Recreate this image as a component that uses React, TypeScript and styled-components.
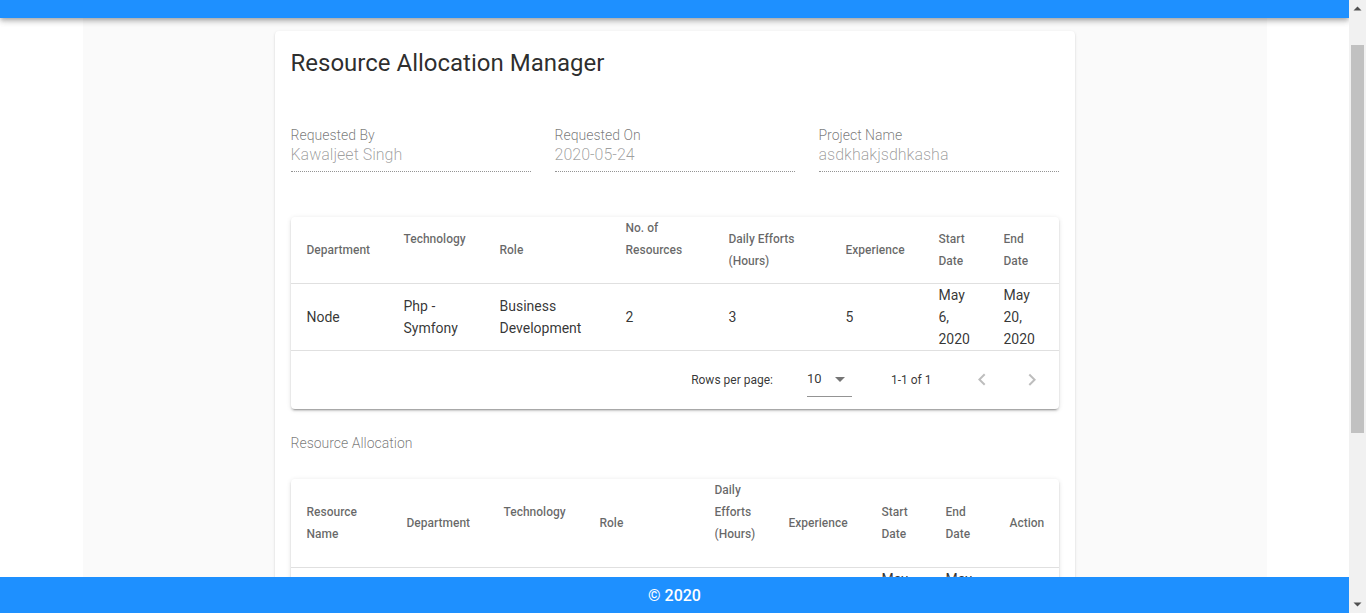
import React from "react";
import styled, { createGlobalStyle } from "styled-components";
import { Trash2 } from "lucide-react";

const GlobalStyle = createGlobalStyle`
  body {
    margin: 0;
    background: #fff;
    font-family: Roboto, "Liberation Sans", Arial, sans-serif;
    color: rgba(0, 0, 0, 0.87);
  }
`;

type Column = { key: string; title: string[]; width: number };
type Row = Record<string, React.ReactNode[]>;

const blank = "\u00a0";

const requestColumns: Column[] = [
  { key: "department", title: ["Department"], width: 97 },
  { key: "technology", title: ["Technology", blank], width: 96 },
  { key: "role", title: ["Role"], width: 126 },
  { key: "resources", title: ["No. of", "Resources", blank], width: 103 },
  { key: "efforts", title: ["Daily Efforts", "(Hours)"], width: 117 },
  { key: "experience", title: ["Experience"], width: 93 },
  { key: "start", title: ["Start", "Date"], width: 65 },
  { key: "end", title: ["End", "Date"], width: 71 },
];

const allocationColumns: Column[] = [
  { key: "name", title: ["Resource", "Name"], width: 100 },
  { key: "department", title: ["Department"], width: 97 },
  { key: "technology", title: ["Technology", blank], width: 96 },
  { key: "role", title: ["Role"], width: 115 },
  { key: "efforts", title: ["Daily", "Efforts", "(Hours)", blank], width: 74 },
  { key: "experience", title: ["Experience"], width: 93 },
  { key: "start", title: ["Start", "Date"], width: 64 },
  { key: "end", title: ["End", "Date"], width: 64 },
  { key: "action", title: ["Action"], width: 65 },
];

const requestRows: Row[] = [
  {
    department: ["Node"],
    technology: ["Php -", "Symfony"],
    role: ["Business", "Development"],
    resources: ["2"],
    efforts: ["3"],
    experience: ["5"],
    start: ["May", "6,", "2020"],
    end: ["May", "20,", "2020"],
  },
];

const allocationRows: Row[] = [
  {
    name: ["Kawaljeet", "Singh"],
    department: ["Node"],
    technology: ["Php -", "Symfony"],
    role: ["Business", "Development"],
    efforts: ["3"],
    experience: ["5"],
    start: ["May", "6,", "2020"],
    end: ["May", "20,", "2020"],
    action: [<Trash2 key="del" size={18} color="rgba(0,0,0,0.54)" />],
  },
];

const Pager = () => (
  <PagerBar>
    <PagerCaption>Rows per page:</PagerCaption>
    <PageSelect>
      <span>10</span>
      <svg width="24" height="20" viewBox="0 2 24 20">
        <path d="M7 10l5 5 5-5z" fill="rgba(0,0,0,0.54)" />
      </svg>
    </PageSelect>
    <PagerRange>1-1 of 1</PagerRange>
    <PagerActions>
      <NavButton disabled aria-label="previous page">
        <svg width="24" height="24" viewBox="0 0 24 24">
          <path d="M15.41 16.09l-4.58-4.59 4.58-4.59L14 5.5l-6 6 6 6z" />
        </svg>
      </NavButton>
      <NavButton disabled aria-label="next page">
        <svg width="24" height="24" viewBox="0 0 24 24">
          <path d="M8.59 16.34l4.59-4.59-4.59-4.59L10 5.75l6 6-6 6z" />
        </svg>
      </NavButton>
    </PagerActions>
  </PagerBar>
);

const DataTable = ({ columns, rows }: { columns: Column[]; rows: Row[] }) => (
  <TablePaper>
    <Table>
      <thead>
        <tr>
          {columns.map((col) => (
            <HeadCell key={col.key} $width={col.width}>
              {col.title.map((line, i) => (
                <Line key={i}>{line}</Line>
              ))}
            </HeadCell>
          ))}
        </tr>
      </thead>
      <tbody>
        {rows.map((row, r) => (
          <tr key={r}>
            {columns.map((col) => (
              <BodyCell key={col.key}>
                {(row[col.key] || []).map((line, i) => (
                  <Line key={i}>{line}</Line>
                ))}
              </BodyCell>
            ))}
          </tr>
        ))}
      </tbody>
    </Table>
    <Pager />
  </TablePaper>
);

// stand-in for the browser's classic scrollbar seen in the screenshot
const ScrollRail = () => (
  <Rail>
    <RailButton>
      <svg width="17" height="17" viewBox="0 0 17 17">
        <path d="M4.5 10.5h8l-4-4z" fill="#505050" />
      </svg>
    </RailButton>
    <RailTrack>
      <RailThumb />
    </RailTrack>
    <RailButton>
      <svg width="17" height="17" viewBox="0 0 17 17">
        <path d="M4.5 6.5h8l-4 4z" fill="#505050" />
      </svg>
    </RailButton>
  </Rail>
);

const App = () => {
  return (
    <Page>
      <GlobalStyle />
      <TopBar />
      <Main>
        <Card>
          <Title>Resource Allocation Manager</Title>
          <Fields>
            <div>
              <FieldLabel>Requested By</FieldLabel>
              <FieldValue>Kawaljeet Singh</FieldValue>
            </div>
            <div>
              <FieldLabel>Requested On</FieldLabel>
              <FieldValue>2020-05-24</FieldValue>
            </div>
            <div>
              <FieldLabel>Project Name</FieldLabel>
              <FieldValue>asdkhakjsdhkasha</FieldValue>
            </div>
          </Fields>
          <TableBlock>
            <DataTable columns={requestColumns} rows={requestRows} />
          </TableBlock>
          <SectionLabel>Resource Allocation</SectionLabel>
          <DataTable columns={allocationColumns} rows={allocationRows} />
        </Card>
      </Main>
      <Footer>© 2020</Footer>
      <ScrollRail />
    </Page>
  );
};

const Page = styled.div`
  margin-right: 17px;
`;

const TopBar = styled.header`
  position: relative;
  z-index: 2;
  height: 18px;
  background: #1e90ff;
  box-shadow: 0 2px 4px -1px rgba(0, 0, 0, 0.2), 0 4px 5px 0 rgba(0, 0, 0, 0.14),
    0 1px 10px 0 rgba(0, 0, 0, 0.12);
`;

const Main = styled.main`
  width: 1184px;
  margin: 0 auto;
  background: #fafafa;
  padding: 13px 0 162px;
`;

const Card = styled.section`
  width: 800px;
  box-sizing: border-box;
  margin: 0 auto;
  padding: 16px;
  background: #fff;
  border-radius: 4px;
  box-shadow: 0 2px 1px -1px rgba(0, 0, 0, 0.2), 0 1px 1px 0 rgba(0, 0, 0, 0.14),
    0 1px 3px 0 rgba(0, 0, 0, 0.12);
`;

const Title = styled.h1`
  margin: 0;
  font-size: 24px;
  line-height: 32px;
  font-weight: 400;
  color: rgba(0, 0, 0, 0.84);
`;

const Fields = styled.div`
  display: grid;
  grid-template-columns: repeat(3, 1fr);
  column-gap: 24px;
  margin-top: 46px;
`;

const FieldLabel = styled.div`
  font-size: 14px;
  line-height: 20px;
  font-weight: 300;
  color: rgba(0, 0, 0, 0.54);
`;

const FieldValue = styled.div`
  font-size: 16px;
  line-height: 20px;
  font-weight: 300;
  color: rgba(0, 0, 0, 0.38);
  padding-bottom: 6px;
  border-bottom: 1px dotted rgba(0, 0, 0, 0.42);
`;

const TableBlock = styled.div`
  margin-top: 45px;
`;

const SectionLabel = styled.div`
  margin: 24px 0 26px;
  font-size: 14px;
  line-height: 20px;
  font-weight: 300;
  color: rgba(0, 0, 0, 0.54);
`;

const TablePaper = styled.div`
  background: #fff;
  border-radius: 4px;
  box-shadow: 0 3px 1px -2px rgba(0, 0, 0, 0.2), 0 2px 2px 0 rgba(0, 0, 0, 0.14),
    0 1px 5px 0 rgba(0, 0, 0, 0.12);
`;

const Table = styled.table`
  width: 100%;
  table-layout: fixed;
  border-collapse: collapse;
`;

const HeadCell = styled.th<{ $width: number }>`
  width: ${(p) => p.$width}px;
  box-sizing: border-box;
  padding: 0 16px;
  text-align: left;
  vertical-align: middle;
  font-size: 12px;
  line-height: 22px;
  font-weight: 500;
  color: rgba(0, 0, 0, 0.6);
  border-bottom: 1px solid #e0e0e0;
`;

const BodyCell = styled.td`
  padding: 0 16px;
  vertical-align: middle;
  font-size: 14px;
  line-height: 22px;
  color: rgba(0, 0, 0, 0.8);
  border-bottom: 1px solid #e0e0e0;
`;

const Line = styled.span`
  display: block;
  white-space: nowrap;
`;

const PagerBar = styled.div`
  display: flex;
  align-items: center;
  justify-content: flex-end;
  height: 58px;
  padding-right: 3px;
  font-size: 12px;
  color: rgba(0, 0, 0, 0.8);
`;

const PagerCaption = styled.span`
  margin-right: 34px;
`;

const PageSelect = styled.div`
  display: flex;
  align-items: center;
  width: 45px;
  box-sizing: border-box;
  padding: 6px 0 7px;
  font-size: 13px;
  line-height: 20px;
  border-bottom: 1px solid rgba(0, 0, 0, 0.42);
  justify-content: space-between;
`;

const PagerRange = styled.span`
  margin: 0 26px 0 39px;
`;

const PagerActions = styled.div`
  display: flex;
  gap: 2px;
`;

const NavButton = styled.button`
  display: flex;
  align-items: center;
  justify-content: center;
  width: 48px;
  height: 48px;
  padding: 0;
  border: none;
  background: none;
  fill: rgba(0, 0, 0, 0.26);
`;

const Footer = styled.footer`
  position: fixed;
  left: 0;
  right: 17px;
  bottom: 0;
  z-index: 3;
  height: 36px;
  display: flex;
  align-items: center;
  justify-content: center;
  background: #1e90ff;
  color: #fff;
  font-size: 16px;
  font-weight: 500;
`;

const Rail = styled.div`
  position: fixed;
  top: 0;
  right: 0;
  bottom: 0;
  z-index: 4;
  width: 17px;
  display: flex;
  flex-direction: column;
  background: #f1f1f1;
`;

const RailButton = styled.div`
  height: 17px;
  flex: none;
  svg {
    display: block;
  }
`;

const RailTrack = styled.div`
  flex: 1;
  padding: 28px 2px 0;
`;

const RailThumb = styled.div`
  height: 388px;
  background: #c1c1c1;
`;

export default App;
